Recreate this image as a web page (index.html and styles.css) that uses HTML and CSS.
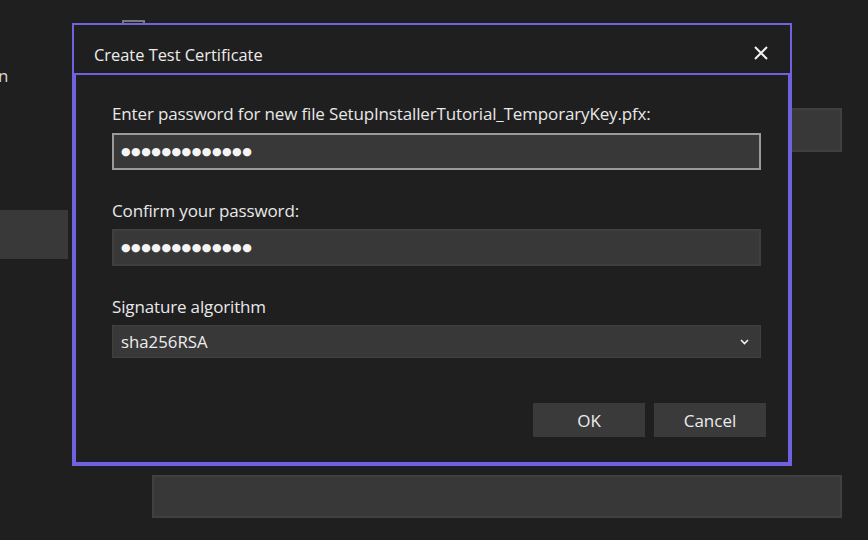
FILE: index.html
```html
<!DOCTYPE html>
<html lang="en">
<head>
    <meta charset="UTF-8">
    <title>Create Test Certificate</title>
    <link rel="stylesheet" href="styles.css">
</head>
<body>
    <div class="page">
        <div class="bg-check"></div>
        <div class="bg-label">n</div>
        <div class="bg-row">
            <div class="bg-field bg-right"></div>
        </div>
        <div class="bg-left"></div>
        <div class="bg-field bg-bottom"></div>
    </div>

    <div class="dialog">
        <div class="dialog-title">
            <span>Create Test Certificate</span>
            <svg class="close" width="14" height="14" viewBox="0 0 14 14">
                <path d="M1 1 L13 13 M13 1 L1 13" stroke="#f2f2f2" stroke-width="2" fill="none"/>
            </svg>
        </div>
        <div class="dialog-body">
            <div class="label">Enter password for new file SetupInstallerTutorial_TemporaryKey.pfx:</div>
            <div class="field focused"><span class="dots">●●●●●●●●●●●●●</span></div>

            <div class="label gap">Confirm your password:</div>
            <div class="field"><span class="dots">●●●●●●●●●●●●●</span></div>

            <div class="label gap">Signature algorithm</div>
            <div class="select">
                <span>sha256RSA</span>
                <svg width="9" height="6" viewBox="0 0 9 6">
                    <path d="M1 1 L4.5 4.5 L8 1" stroke="#f0f0f0" stroke-width="1.6" fill="none"/>
                </svg>
            </div>

            <div class="buttons">
                <button>OK</button>
                <button>Cancel</button>
            </div>
        </div>
    </div>
</body>
</html>
```

FILE: styles.css
```css
body {
    margin: 0;
    background: #1f1f1f;
    font-family: "Open Sans", "Noto Sans", sans-serif;
    color: #e6e6e6;
    overflow: hidden;
}
.page {
    width: 868px;
    height: 540px;
    padding-top: 20px;
    box-sizing: border-box;
}
.bg-check {
    margin-left: 122px;
    width: 19px;
    height: 19px;
    border: 2px solid #7a7a7a;
}
.bg-label {
    margin-top: 22px;
    margin-left: -2px;
    font-size: 17px;
    line-height: 22px;
    color: #d8d8d8;
}
.bg-row {
    margin-top: 21px;
    display: flex;
    justify-content: flex-end;
    padding-right: 26px;
}
.bg-field {
    background: #383838;
    border: 2px solid #404040;
    box-sizing: border-box;
}
.bg-right {
    width: 52px;
    height: 44px;
}
.bg-left {
    margin-top: 58px;
    width: 68px;
    height: 49px;
    background: #393939;
}
.bg-bottom {
    margin-top: 216px;
    margin-left: 152px;
    width: 690px;
    height: 43px;
}

/* dialog over the page */
.dialog {
    position: absolute;
    left: 72px;
    top: 23px;
    width: 720px;
    background: #1f1f1f;
}
.dialog-title {
    height: 52px;
    box-sizing: border-box;
    border: 2px solid #6e62e0;
    padding: 0 22px 0 20px;
    display: flex;
    align-items: center;
    justify-content: space-between;
    font-size: 16.4px;
    color: #ececec;
}
.dialog-title span {
    margin-top: 10px;
}
.close {
    margin-top: 8px;
}
.dialog-body {
    border: 4px solid #6e62e0;
    border-top: none;
    padding: 28px 27px 25px 36px;
}
.label {
    font-size: 17px;
    letter-spacing: -0.15px;
    line-height: 22px;
    margin-bottom: 8px;
    color: #e8e8e8;
}
.label.gap {
    margin-top: 30px;
    margin-bottom: 7px;
}
.field {
    height: 37px;
    box-sizing: border-box;
    background: #383838;
    border: 2px solid #3f3f3f;
    display: flex;
    align-items: center;
    padding-left: 7px;
}
.field.focused {
    border-color: #9a9a9a;
}
.dots {
    font-family: "DejaVu Sans", sans-serif;
    font-size: 11px;
    letter-spacing: 0.5px;
    color: #f4f4f4;
}
.select {
    height: 33px;
    box-sizing: border-box;
    background: #383838;
    border: 1px solid #404040;
    display: flex;
    align-items: center;
    justify-content: space-between;
    padding: 0 11px 0 8px;
    font-size: 16.8px;
    color: #ececec;
}
.buttons {
    margin-top: 45px;
    display: flex;
    justify-content: flex-end;
    gap: 9px;
    margin-right: -5px;
}
button {
    width: 112px;
    height: 34px;
    border: none;
    background: #3a3a3a;
    color: #ececec;
    font-family: "Open Sans", "Noto Sans", sans-serif;
    font-size: 17px;
    padding: 0;
}
```
